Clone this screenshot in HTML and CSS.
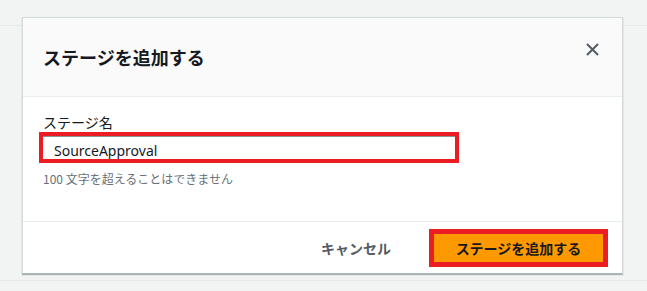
FILE: index.html
```html
<!DOCTYPE html>
<html lang="ja">
<head>
    <meta charset="UTF-8">
    <meta name="viewport" content="width=device-width, initial-scale=1.0">
    <title>ステージを追加する</title>
    <link rel="stylesheet" href="styles.css">
</head>
<body>
    <div class="page">
        <div class="page-top"></div>
        <div class="page-main"></div>
        <div class="page-bottom"></div>
    </div>

    <div class="modal">
        <div class="modal-header">
            <h1>ステージを追加する</h1>
            <button class="close" aria-label="閉じる">
                <svg width="13" height="13" viewBox="0 0 13 13">
                    <path d="M1 1 L12 12 M12 1 L1 12" stroke="#545b64" stroke-width="2" fill="none"/>
                </svg>
            </button>
        </div>
        <div class="modal-body">
            <label for="stageName">ステージ名</label>
            <input type="text" id="stageName" value="SourceApproval">
            <div class="hint">100 文字を超えることはできません</div>
        </div>
        <div class="modal-footer">
            <button class="cancel">キャンセル</button>
            <button class="primary">ステージを追加する</button>
        </div>
    </div>
</body>
</html>
```

FILE: styles.css
```css
body {
    margin: 0;
    background: #f2f3f3;
    font-family: "Noto Sans CJK JP", "Noto Sans", sans-serif;
    color: #16191f;
}
.page {
    height: 291px;
    display: flex;
    flex-direction: column;
}
.page-top {
    height: 25px;
    border-bottom: 1px solid #e6e9e9;
}
.page-main {
    flex: 1;
}
.page-bottom {
    height: 10px;
    border-top: 1px solid #e6e9e9;
}
.modal {
    position: absolute;
    left: 22px;
    top: 17px;
    width: 601px;
    height: 257px;
    box-sizing: border-box;
    background: #fff;
    border: 1px solid #d5dbdb;
    border-bottom-color: #aab7b8;
    box-shadow: 0 1px 1px 0 rgba(0, 28, 36, .3);
    display: flex;
    flex-direction: column;
}
.modal-header {
    height: 78px;
    background: #fafafa;
    border-bottom: 1px solid #eaeded;
    display: flex;
    justify-content: space-between;
    align-items: center;
    padding: 0 22px 0 20px;
}
.modal-header h1 {
    margin: 0;
    font-size: 18px;
    font-weight: bold;
    line-height: 22px;
}
.close {
    border: none;
    background: none;
    padding: 0;
    width: 15px;
    height: 15px;
    display: flex;
    align-items: center;
    justify-content: center;
    margin-bottom: 16px;
    cursor: pointer;
}
.modal-body {
    height: 125px;
    padding: 15px 20px 0;
    box-sizing: border-box;
    border-bottom: 1px solid #eaeded;
}
.modal-body label {
    display: block;
    font-size: 14px;
    line-height: 20px;
}
.modal-body input {
    display: block;
    box-sizing: border-box;
    width: 420px;
    height: 31px;
    margin: 0 0 0 -4px;
    padding: 5px 0 0 11px;
    border: 4px solid #ec1c24;
    box-shadow: inset 0 1px 0 #879596;
    font-family: "Noto Sans", "Noto Sans CJK JP", sans-serif;
    font-size: 14px;
    color: #16191f;
    outline: none;
}
.hint {
    margin-top: 8px;
    font-size: 12px;
    line-height: 16px;
    color: #687078;
}
.modal-footer {
    flex: 1;
    display: flex;
    justify-content: flex-end;
    align-items: center;
    padding: 0 14px 0 0;
}
.modal-footer button {
    font-family: "Noto Sans CJK JP", sans-serif;
    font-size: 14px;
    font-weight: bold;
    cursor: pointer;
}
.cancel {
    border: none;
    background: none;
    padding: 0;
    color: #545b64;
    margin-right: 38px;
}
.primary {
    width: 179px;
    height: 38px;
    box-sizing: border-box;
    border: 5px solid #ec1c24;
    background: #ff9900;
    color: #16191f;
    padding: 0;
}
```
